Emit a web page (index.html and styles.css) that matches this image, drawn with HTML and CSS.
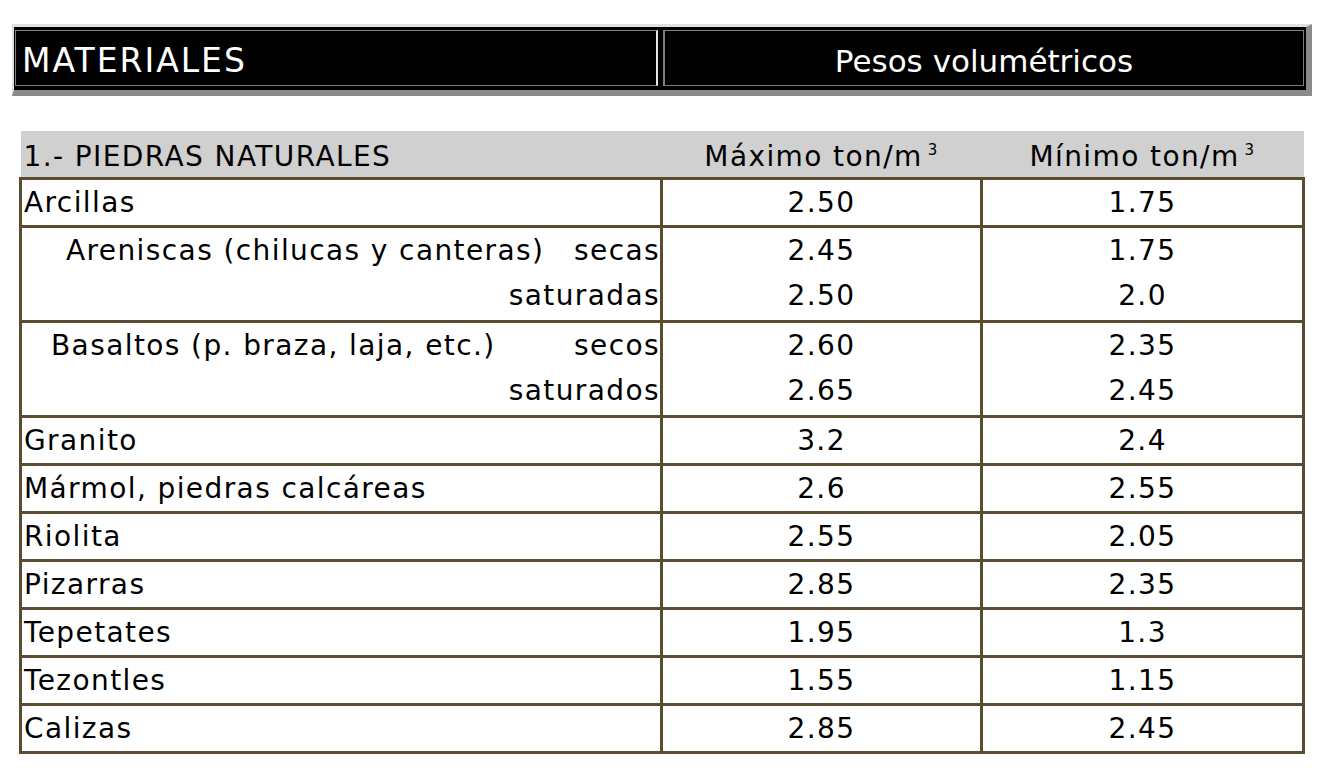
FILE: index.html
```html
<!DOCTYPE html>
<html lang="es">
<head>
<meta charset="utf-8">
<title>Pesos volumétricos</title>
<link rel="stylesheet" href="styles.css">
</head>
<body>
<div class="page">
  <div class="titlebar">
    <div class="tcell tleft">MATERIALES</div>
    <div class="tcell tright">Pesos volumétricos</div>
  </div>

  <table class="data">
    <colgroup>
      <col class="c1"><col class="c2"><col class="c3">
    </colgroup>
    <thead>
      <tr>
        <th class="name">1.- PIEDRAS NATURALES</th>
        <th>Máximo ton/m<sup>3</sup></th>
        <th>Mínimo ton/m<sup>3</sup></th>
      </tr>
    </thead>
    <tbody>
      <tr><td class="name">Arcillas</td><td>2.50</td><td>1.75</td></tr>
      <tr class="double">
        <td class="name">
          <div class="sub sub1"><span>Areniscas (chilucas y canteras)</span><span>secas</span></div>
          <div class="sub right">saturadas</div>
        </td>
        <td><div>2.45</div><div>2.50</div></td>
        <td><div>1.75</div><div>2.0</div></td>
      </tr>
      <tr class="double">
        <td class="name">
          <div class="sub sub2"><span>Basaltos (p. braza, laja, etc.)</span><span>secos</span></div>
          <div class="sub right">saturados</div>
        </td>
        <td><div>2.60</div><div>2.65</div></td>
        <td><div>2.35</div><div>2.45</div></td>
      </tr>
      <tr><td class="name">Granito</td><td>3.2</td><td>2.4</td></tr>
      <tr><td class="name">Mármol, piedras calcáreas</td><td>2.6</td><td>2.55</td></tr>
      <tr><td class="name">Riolita</td><td>2.55</td><td>2.05</td></tr>
      <tr><td class="name">Pizarras</td><td>2.85</td><td>2.35</td></tr>
      <tr><td class="name">Tepetates</td><td>1.95</td><td>1.3</td></tr>
      <tr><td class="name">Tezontles</td><td>1.55</td><td>1.15</td></tr>
      <tr><td class="name">Calizas</td><td>2.85</td><td>2.45</td></tr>
    </tbody>
  </table>
</div>
</body>
</html>
```

FILE: styles.css
```css
html, body {
  margin: 0;
  padding: 0;
  background: #ffffff;
}

body {
  font-family: "DejaVu Sans", "Open Sans", sans-serif;
  color: #000;
}

.page {
  width: 1334px;
  height: 768px;
  padding-top: 24px;
  box-sizing: border-box;
}

.titlebar {
  margin-left: 12px;
  width: 1300px;
  height: 72px;
  box-sizing: border-box;
  border-top: 3px solid #e3e0d7;
  border-left: 2px solid #e3e0d7;
  border-right: 6px solid #8a8a8a;
  border-bottom: 6px solid #8a8a8a;
  background: #000;
  display: grid;
  grid-template-columns: 643px 1fr;
  column-gap: 5px;
  padding: 3px 2px 2px 1px;
}

.tcell {
  color: #fff;
  font-size: 31px;
  line-height: 60px;
  height: 56px;
  box-sizing: border-box;
  border: 1px solid #7d7d7d;
  overflow: hidden;
}

.tleft {
  font-size: 33px;
  letter-spacing: 2px;
  padding-left: 6px;
  border-right: 2px solid #e8e6df;
}

.tright {
  text-align: center;
  border-left: 2px solid #7d7d7d;
}

.data {
  margin-top: 35px;
  margin-left: 19px;
  width: 1283px;
  border-collapse: collapse;
  table-layout: fixed;
  font-size: 28px;
  letter-spacing: 1.4px;
}

.c1 { width: 641px; }
.c2 { width: 320px; }
.c3 { width: 322px; }

.data thead th {
  background: #d0d0d0;
  font-weight: normal;
  padding: 6px 0 0;
  line-height: 40px;
  text-align: center;
  border-bottom: 3px solid #5b4b30;
}

.data thead th.name {
  text-align: left;
  padding-left: 3px;
}

.data sup {
  font-size: 15px;
  line-height: 0;
  vertical-align: 0;
  position: relative;
  top: -11px;
  margin-left: 5px;
}

.data tbody td {
  border: 3px solid #5b4b30;
  padding: 0;
  line-height: 45px;
  text-align: center;
  vertical-align: top;
}

.data tbody tr.double td {
  padding-bottom: 2px;
}

.data tbody td.name {
  text-align: left;
  padding-left: 2px;
}

.sub {
  display: flex;
  justify-content: space-between;
}

.sub1 { padding-left: 42px; }
.sub2 { padding-left: 27px; }

.sub.right {
  justify-content: flex-end;
}
```
